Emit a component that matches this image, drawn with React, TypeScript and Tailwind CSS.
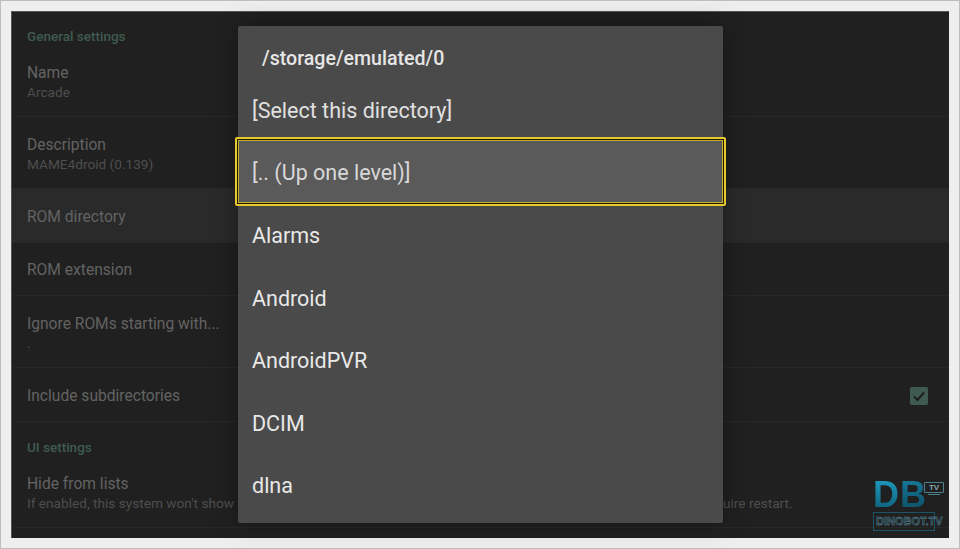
const dirs = ['Alarms', 'Android', 'AndroidPVR', 'DCIM', 'dlna'];

function SectionTitle({ label, className }: { label: string; className: string }) {
  return (
    <div className={`px-[15px] text-[13.5px] leading-[16px] font-medium text-[#3f5b50] ${className}`}>
      {label}
    </div>
  );
}

function Row({
  title,
  sub,
  subEnd,
  className,
  children,
}: {
  title: string;
  sub?: string;
  subEnd?: string;
  className: string;
  children?: React.ReactNode;
}) {
  return (
    <div className={`flex items-center justify-between pl-[15px] pr-[21px] border-b border-[#272727] ${className}`}>
      <div className="whitespace-nowrap">
        <div className="text-[15.6px] leading-[20px] text-[#636363]">{title}</div>
        {sub && (
          <div className="flex text-[13.65px] leading-[18px] text-[#4e4e4e]">
            <span>{sub}</span>
            {subEnd && <span className="ml-[489px]">{subEnd}</span>}
          </div>
        )}
      </div>
      {children}
    </div>
  );
}

function Logo() {
  return (
    <div className="absolute left-[872px] top-[477px] w-[72px] h-[56px] [font-family:'Liberation_Sans',sans-serif]">
      <div className="flex items-start h-[33px]">
        <span className="text-[36px] leading-[33px] font-bold bg-gradient-to-b from-[#1e9cc0] to-[#0f5f7c] bg-clip-text text-transparent">
          D
        </span>
        <span className="ml-[1px] text-[36px] leading-[33px] font-bold bg-gradient-to-b from-[#17799a] to-[#0e5068] bg-clip-text text-transparent">
          B
        </span>
        <div className="mt-[4px] -ml-[2px] w-[20px]">
          <div className="h-[11px] rounded-[1px] border border-[#4d7f8e] text-[8px] leading-[9px] font-bold text-center text-[#86a9b3]">
            TV
          </div>
          <div className="mt-[1px] mx-[4px] h-[1px] bg-[#4d7f8e]" />
        </div>
      </div>
      <div className="relative mt-[1px] w-[62px] h-[19px] border-[1.5px] border-[#1a5668]">
        <span className="absolute left-[2px] top-[1px] text-[11px] leading-[14px] whitespace-nowrap font-bold text-[#17303a] [-webkit-text-stroke:0.4px_#6d97a4]">
          DINOBOT.TV
        </span>
      </div>
    </div>
  );
}

export default function App() {
  return (
    <div className="relative w-[960px] h-[549px] overflow-hidden bg-[#eeeeee] border border-[#bdbdbd] p-[10px] [font-family:Roboto,sans-serif]">
      <div className="w-[938px] h-[527px] bg-[#202020] border-t border-l border-[#555555] overflow-hidden">
        <SectionTitle label="General settings" className="pt-[16px] pb-[1px]" />
        <Row title="Name" sub="Arcade" className="h-[72px] pt-[3px]" />
        <Row title="Description" sub="MAME4droid (0.139)" className="h-[72px] pt-[3px]" />
        <Row title="ROM directory" className="h-[54px] pt-[2px] bg-[#2a2a2a]" />
        <Row title="ROM extension" className="h-[53px] pt-[2px]" />
        <Row title="Ignore ROMs starting with..." sub="." className="h-[72px] pt-[2px]" />
        <Row title="Include subdirectories" className="h-[54px] pt-[2px]">
          <div className="w-[18px] h-[18px] rounded-[2px] bg-[#3f5b50] flex items-center justify-center">
            <svg width="14" height="14" viewBox="0 0 14 14" fill="none" stroke="#1c1c1c" strokeWidth="2">
              <path d="M2 7.5 5.5 11 12 3.5" />
            </svg>
          </div>
        </Row>
        <SectionTitle label="UI settings" className="pt-[17px]" />
        <Row
          title="Hide from lists"
          sub="If enabled, this system won't show"
          subEnd="uire restart."
          className="h-[73px] pt-[3px]"
        />
      </div>

      <div className="absolute left-[237px] top-[25px] w-[485px] h-[497px] rounded-[2px] bg-[#4a4a4a] shadow-[0_0_24px_rgba(0,0,0,0.35)]">
        <div className="h-[56px] pl-[24px] pt-[21px] text-[19.6px] leading-[24px] font-medium text-[#e6e6e6] whitespace-nowrap">
          /storage/emulated/0
        </div>
        <div className="h-[55px] pl-[14px] pt-[4px] flex items-center text-[21.5px] text-[#e0e0e0]">[Select this directory]</div>
        <div className="-mx-[3px] h-[69px] rounded-[2px] border-[2px] border-[#e8c92c] p-[1px] bg-[#1d1d12]">
          <div className="h-full border border-[#c9ad2a] bg-[#5a5a5a] pl-[13px] pt-[3px] flex items-center text-[21.5px] text-[#d8d8d8]">
            [.. (Up one level)]
          </div>
        </div>
        <div className="-mt-px">
          {dirs.map(name => (
            <div key={name} className="h-[62.5px] pl-[14px] flex items-center text-[21.5px] text-[#e8e8e8]">
              {name}
            </div>
          ))}
        </div>
      </div>
      <Logo />
    </div>
  );
}
